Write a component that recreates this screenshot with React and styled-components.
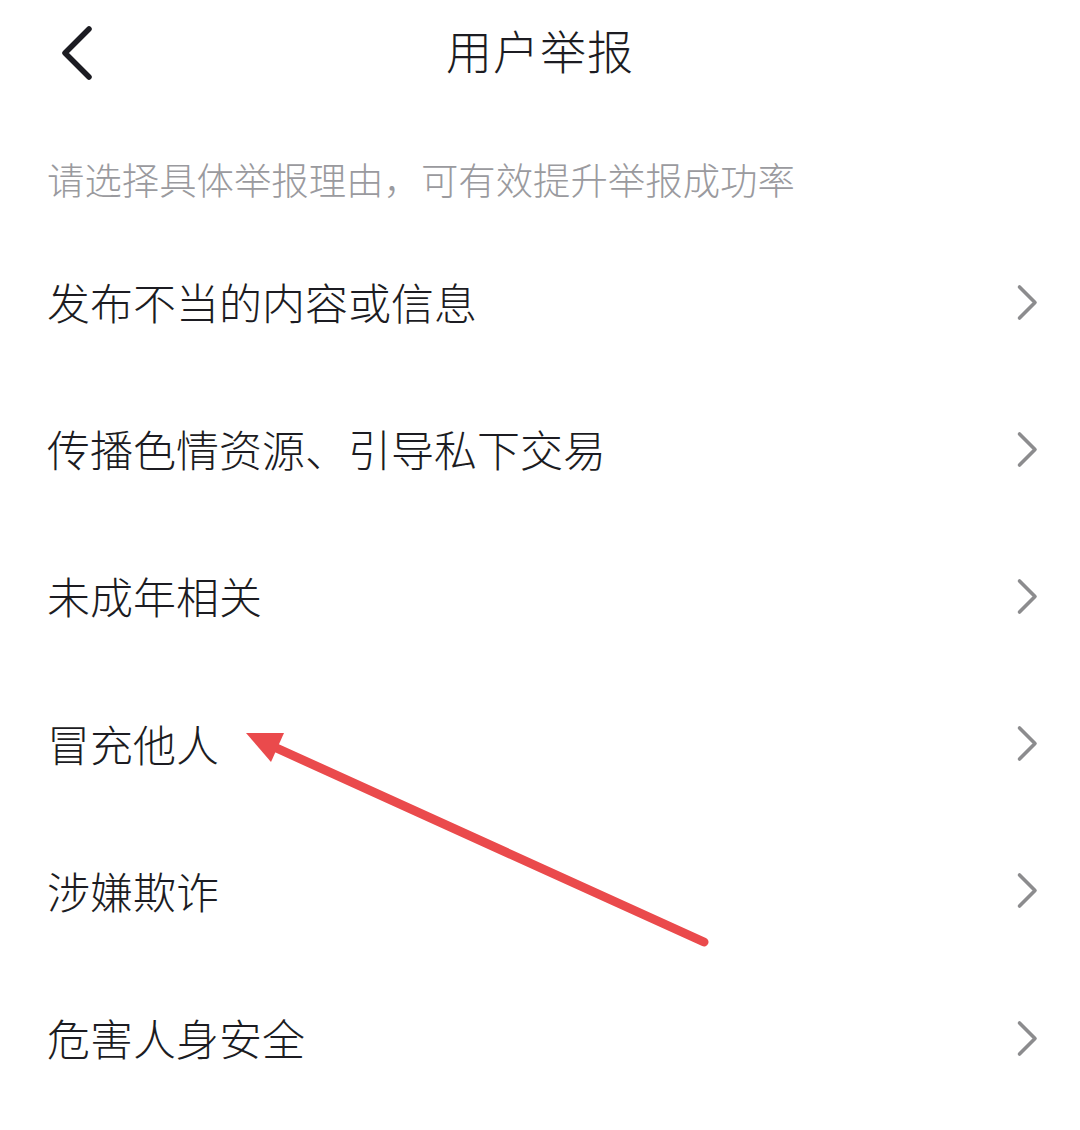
import React from "react";
import styled, { createGlobalStyle } from "styled-components";

const Global = createGlobalStyle`
  html, body { margin: 0; padding: 0; background: #ffffff; }
  body { font-family: "Noto Sans CJK SC", "Noto Sans", sans-serif; }
`;

const Page = styled.div`
  position: relative;
  width: 1080px;
  height: 1130px;
  background: #ffffff;
  overflow: hidden;
`;

const Header = styled.header`
  position: relative;
  height: 104px;
  display: flex;
  align-items: center;
  justify-content: center;
`;

const BackButton = styled.button`
  position: absolute;
  left: 56px;
  top: 22px;
  width: 44px;
  height: 62px;
  border: 0;
  padding: 0;
  background: transparent;
  display: flex;
  align-items: center;
  justify-content: center;
`;

const Title = styled.h1`
  margin: 0 0 6px;
  font-size: 46px;
  font-weight: 300;
  color: #1c1c22;
  line-height: 1;
  letter-spacing: 1px;
`;

const Hint = styled.p`
  margin: 0;
  padding: 51px 47px 25px;
  font-size: 37.4px;
  line-height: 48px;
  color: #9a9a9e;
  font-weight: 300;
`;

const List = styled.ul`
  list-style: none;
  margin: 0;
  padding: 0;
`;

const Row = styled.li`
  height: 147.2px;
  display: flex;
  align-items: center;
  justify-content: space-between;
  padding: 0 40px 0 47px;
`;

const RowLabel = styled.span`
  font-size: 43px;
  color: #1c1c22;
  font-weight: 300;
  line-height: 1;
`;

const Overlay = styled.svg`
  position: absolute;
  left: 0;
  top: 0;
  pointer-events: none;
`;

const Chevron = () => (
  <svg width="24" height="40" viewBox="0 0 24 40">
    <path d="M3.5 5 L19 20.5 L3.5 36" fill="none" stroke="#8c8c8e" strokeWidth="3.6" strokeLinecap="round" strokeLinejoin="round" />
  </svg>
);

const items = [
  "发布不当的内容或信息",
  "传播色情资源、引导私下交易",
  "未成年相关",
  "冒充他人",
  "涉嫌欺诈",
  "危害人身安全",
];

export default function App() {
  return (
    <Page>
      <Global />
      <Header>
        <BackButton aria-label="返回">
          <svg width="44" height="62" viewBox="0 0 44 62">
            <path d="M33 7 L9 31 L33 55" fill="none" stroke="#1c1c22" strokeWidth="5.5" strokeLinecap="round" strokeLinejoin="round" />
          </svg>
        </BackButton>
        <Title>用户举报</Title>
      </Header>
      <Hint>请选择具体举报理由，可有效提升举报成功率</Hint>
      <List>
        {items.map((t) => (
          <Row key={t}>
            <RowLabel>{t}</RowLabel>
            <Chevron />
          </Row>
        ))}
      </List>
      <Overlay width="1080" height="1130" viewBox="0 0 1080 1130">
        <line x1="704" y1="942" x2="272" y2="746" stroke="#ea4a4c" strokeWidth="9" strokeLinecap="round" />
        <polygon points="246,733 284,733 271,762" fill="#ea4a4c" />
      </Overlay>
    </Page>
  );
}
